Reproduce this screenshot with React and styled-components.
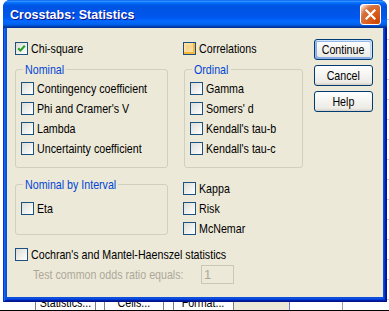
import React from "react";
import styled, { createGlobalStyle, css } from "styled-components";

const GlobalStyle = createGlobalStyle`
  html, body {
    margin: 0;
    padding: 0;
    background: #fff;
  }
  body {
    font-family: "Liberation Sans", Arial, sans-serif;
    font-size: 13px;
    line-height: 13px;
    color: #000;
  }
`;

// Arial Narrow look: Liberation Sans squeezed to 82%
const Narrow = styled.span`
  display: inline-block;
  white-space: nowrap;
  transform: scaleX(0.82);
  transform-origin: ${p => (p.$center ? "center" : "left")} center;
  ${p =>
    p.$w &&
    css`
      width: ${p.$w}px;
    `}
`;

const Page = styled.div`
  width: 389px;
  height: 311px;
  overflow: hidden;
  display: flex;
  flex-direction: column;
  background: #fff;
`;

const Desk = styled.div`
  display: flex;
  height: 302px;
  flex: none;
`;

const Gutter = styled.div`
  width: ${p => p.$w}px;
  flex: ${p => (p.$w ? "none" : "1")};
  background: #fff;
  ${p =>
    p.$grid &&
    css`
      background: repeating-linear-gradient(180deg, #fff 0 19px, #c8c8c8 19px 20px);
    `}
`;

const Window = styled.div`
  width: 384px;
  flex: none;
  display: flex;
  flex-direction: column;
  border-radius: 7px 7px 0 0;
  overflow: hidden;
  background: #0831d9;
`;

const TitleBar = styled.div`
  height: 28px;
  flex: none;
  display: flex;
  align-items: center;
  justify-content: space-between;
  padding: 0 6px 0 7px;
  background: linear-gradient(
    180deg,
    #0058ee 0%,
    #3593ff 4%,
    #288eff 6%,
    #127dff 8%,
    #036ffc 10%,
    #0262ee 14%,
    #0057e5 20%,
    #0054e3 24%,
    #0055eb 56%,
    #005bf5 66%,
    #026afe 76%,
    #0062ef 86%,
    #0052d6 92%,
    #0040ab 94%,
    #003092 100%
  );
`;

const Title = styled.span`
  font-weight: bold;
  font-size: 12.5px;
  line-height: 14px;
  padding-top: 2px;
  color: #fff;
  text-shadow: 1px 1px #0f1089;
`;

const CloseButton = styled.div`
  width: 21px;
  height: 21px;
  box-sizing: border-box;
  border: 1px solid #fff;
  border-radius: 3px;
  display: grid;
  place-items: center;
  background: radial-gradient(circle at 90% 90%, #cc4600 0%, #dc6527 55%, #cd7546 70%, #ffccb2 90%, #fff 100%);
`;

const Frame = styled.div`
  flex: 1;
  display: flex;
  padding: 0 4px 5px 4px;
  background: #0b4fdc;
  box-shadow: inset 1px 0 #0831d9, inset -1px -1px #00138c, inset 2px 0 #166aee, inset -2px -2px #001ea0,
    inset 3px 0 #0855dd, inset -3px -3px #003bda;
`;

const Body = styled.div`
  flex: 1;
  display: flex;
  gap: 11px;
  padding: 11px 10px 0 8px;
  background: #ece9d8;
`;

const Options = styled.div`
  width: 288px;
  flex: none;
  display: flex;
  flex-direction: column;
`;

const Row = styled.div`
  display: grid;
  grid-template-columns: 153px 120px;
  column-gap: 15px;
  margin-top: ${p => p.$mt}px;
`;

const Stack = styled.div`
  display: flex;
  flex-direction: column;
  gap: 7px;
  margin-top: ${p => p.$mt || 0}px;
`;

const Group = styled.fieldset`
  margin: 0 0 0 ${p => p.$inset || 0}px;
  padding: ${p => p.$pt}px 5px ${p => p.$pb}px;
  border: 1px solid #d0d0bf;
  border-radius: 3px;
  min-width: 0;
  display: flex;
  flex-direction: column;
  gap: 7px;
`;

const Legend = styled.legend`
  padding: 0 2px;
  margin-left: 2px;
  color: #0046d5;
  line-height: 13px;
`;

const CheckRow = styled.label`
  display: flex;
  align-items: center;
  gap: 3px;
  height: 13px;
  white-space: nowrap;
  ${p =>
    p.$span &&
    css`
      grid-column: 1 / -1;
    `}
`;

const Box = styled.span`
  width: 13px;
  height: 13px;
  flex: none;
  box-sizing: border-box;
  border: 1px solid #1c5180;
  background: linear-gradient(135deg, #dcdcd7, #fff);
  display: grid;
  place-items: center;
  ${p =>
    p.$hot &&
    css`
      background: linear-gradient(135deg, #f4c873, #fbe8bf);
      box-shadow: inset -2px -2px #f8b636, inset 2px 2px #fedf9c;
    `}
`;

const OddsRow = styled.div`
  display: grid;
  grid-template-columns: 168px 33px;
  align-items: center;
  padding-left: 18px;
  margin-top: 4px;
  color: #aca899;
`;

const OddsLabel = styled.div`
  min-width: 0;
  white-space: nowrap;
`;

const OddsInput = styled.div`
  height: 19px;
  box-sizing: border-box;
  border: 1px solid #c9c7ba;
  padding: 2px 0 0 2px;
  color: #aca899;
`;

const Buttons = styled.div`
  width: 59px;
  flex: none;
  display: flex;
  flex-direction: column;
  gap: 5px;
`;

const Button = styled.button`
  width: 59px;
  height: 21px;
  box-sizing: border-box;
  padding: 0;
  border: 1px solid #003c74;
  border-radius: 3px;
  background: linear-gradient(180deg, #fff, #ecebe6 86%, #d6d0c5);
  font-family: "Liberation Sans", Arial, sans-serif;
  font-size: 13px;
  line-height: 13px;
  color: #000;
  ${p =>
    p.$default &&
    css`
      box-shadow: inset -1px 1px #cee7ff, inset 1px 2px #98b8ea, inset -2px 2px #bcd4f6, inset 1px -1px #89ade4,
        inset 2px -2px #89ade4;
    `}
`;

const Strip = styled.div`
  height: 9px;
  flex: none;
  display: flex;
  box-sizing: border-box;
  border-bottom: 1px solid #000;
  background: #fff;
`;

const StripCell = styled.div`
  width: ${p => p.$w}px;
  flex: ${p => (p.$w ? "none" : "1")};
  overflow: hidden;
  background: ${p => p.$bg || "#fff"};
  box-sizing: border-box;
  display: flex;
  justify-content: center;
  ${p =>
    p.$tab &&
    css`
      border-left: 1px solid #7f7f7f;
      border-right: 1px solid #7f7f7f;
    `}
  ${p =>
    p.$line &&
    css`
      border-left: 1px solid ${p.$line};
    `}
`;

const StripText = styled(Narrow)`
  margin-top: -6px;
  line-height: 13px;
`;

function Check({ label, checked, hot, span }) {
  return (
    <CheckRow $span={span}>
      <Box $hot={hot}>
        {checked && (
          <svg width="9" height="9" viewBox="0 0 9 9">
            <path d="M1.2 4.2 L3.4 6.6 L7.8 1.8" fill="none" stroke="#21a121" strokeWidth="2" />
          </svg>
        )}
      </Box>
      <Narrow>{label}</Narrow>
    </CheckRow>
  );
}

const nominal = ["Contingency coefficient", "Phi and Cramer's V", "Lambda", "Uncertainty coefficient"];
const ordinal = ["Gamma", "Somers' d", "Kendall's tau-b", "Kendall's tau-c"];
const extra = ["Kappa", "Risk", "McNemar"];

export default function App() {
  return (
    <Page>
      <GlobalStyle />
      <Desk>
        <Gutter $w={3} />
        <Window>
          <TitleBar>
            <Title>Crosstabs: Statistics</Title>
            <CloseButton>
              <svg width="11" height="11" viewBox="0 0 11 11">
                <path d="M1.5 1.5 L9.5 9.5 M9.5 1.5 L1.5 9.5" stroke="#fff" strokeWidth="2.2" strokeLinecap="square" />
              </svg>
            </CloseButton>
          </TitleBar>
          <Frame>
            <Body>
              <Options>
                <Row $mt={3}>
                  <Check label="Chi-square" checked />
                  <Check label="Correlations" hot />
                </Row>
                <Row $mt={8}>
                  <Group $pt={6} $pb={12}>
                    <Legend>
                      <Narrow $w={39}>Nominal</Narrow>
                    </Legend>
                    {nominal.map(n => (
                      <Check key={n} label={n} />
                    ))}
                  </Group>
                  <Group $pt={6} $pb={11} $inset={1}>
                    <Legend>
                      <Narrow $w={35}>Ordinal</Narrow>
                    </Legend>
                    {ordinal.map(n => (
                      <Check key={n} label={n} />
                    ))}
                  </Group>
                </Row>
                <Row $mt={10}>
                  <Group $pt={11} $pb={18}>
                    <Legend>
                      <Narrow $w={91}>Nominal by Interval</Narrow>
                    </Legend>
                    <Check label="Eta" />
                  </Group>
                  <Stack $mt={4}>
                    {extra.map(n => (
                      <Check key={n} label={n} />
                    ))}
                  </Stack>
                </Row>
                <Row $mt={13}>
                  <Check label="Cochran's and Mantel-Haenszel statistics" span />
                </Row>
                <OddsRow>
                  <OddsLabel>
                    <Narrow>Test common odds ratio equals:</Narrow>
                  </OddsLabel>
                  <OddsInput>1</OddsInput>
                </OddsRow>
              </Options>
              <Buttons>
                <Button $default>
                  <Narrow $center>Continue</Narrow>
                </Button>
                <Button>
                  <Narrow $center>Cancel</Narrow>
                </Button>
                <Button>
                  <Narrow $center>Help</Narrow>
                </Button>
              </Buttons>
            </Body>
          </Frame>
        </Window>
        <Gutter $grid />
      </Desk>
      <Strip>
        <StripCell $w={35} />
        <StripCell $w={61} $tab>
          <StripText $center>Statistics...</StripText>
        </StripCell>
        <StripCell $w={8} />
        <StripCell $w={60} $tab>
          <StripText $center>Cells...</StripText>
        </StripCell>
        <StripCell $w={9} />
        <StripCell $w={61} $tab>
          <StripText $center>Format...</StripText>
        </StripCell>
        <StripCell $w={55} $bg="#ece9d8" />
        <StripCell $w={53} $line="#6a7fd0" />
        <StripCell $line="#a0a0a0" />
      </Strip>
    </Page>
  );
}
